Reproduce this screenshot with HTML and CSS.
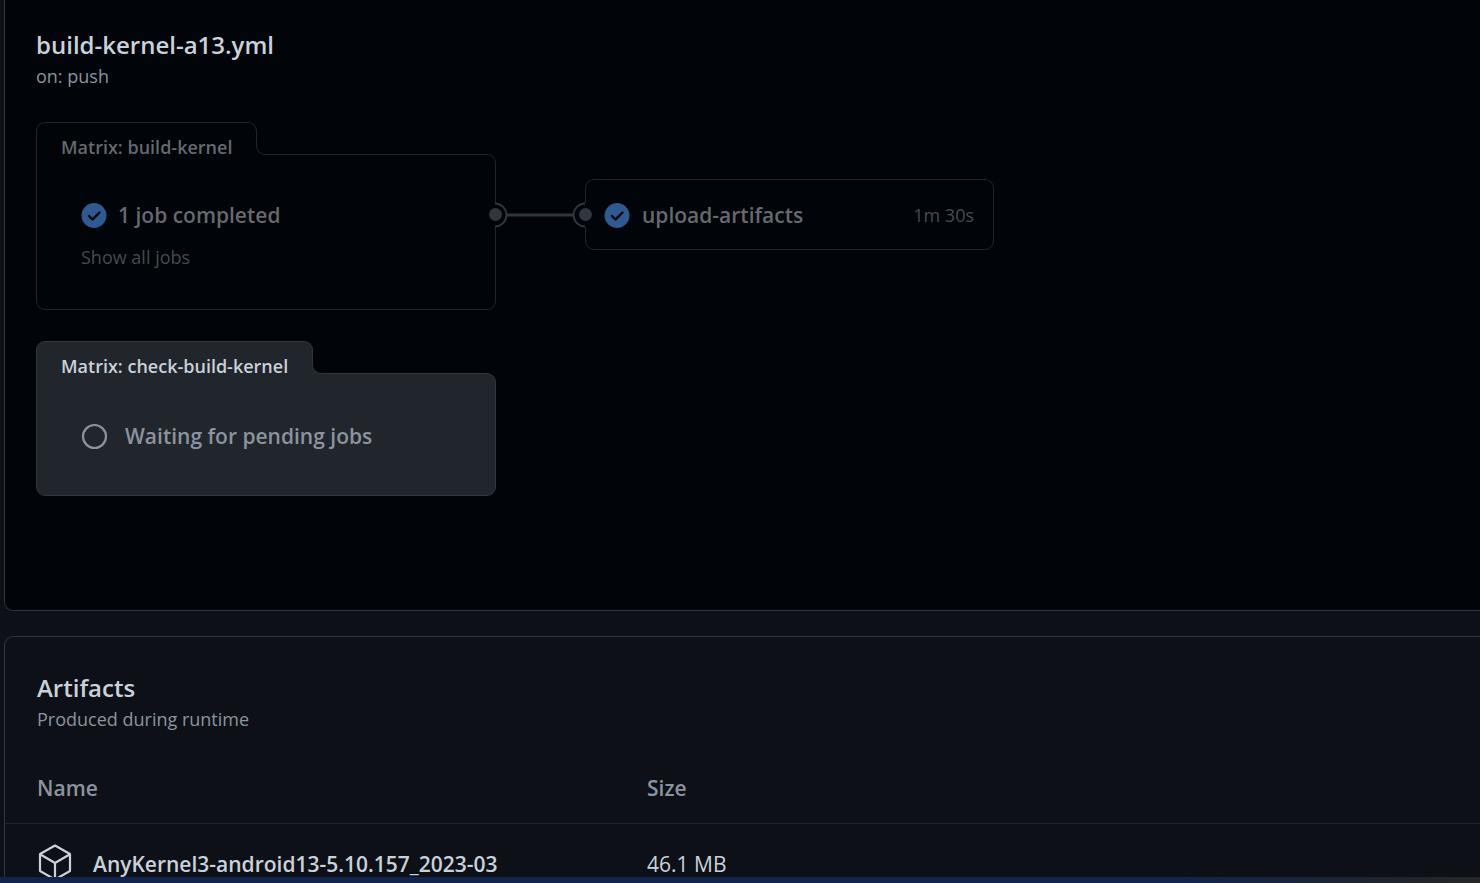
FILE: index.html
```
<!DOCTYPE html>
<html lang="en">
<head>
    <meta charset="UTF-8">
    <meta name="viewport" content="width=device-width, initial-scale=1.0">
    <title>build-kernel-a13.yml</title>
    <link rel="stylesheet" href="styles.css">
</head>
<body>
    <main class="page">
        <section class="panel workflow">
            <h2 class="title">build-kernel-a13.yml</h2>
            <p class="subtitle">on: push</p>

            <div class="graph-row dimmed">
                <div class="matrix">
                    <h3 class="matrix-tab">Matrix: build-kernel</h3>
                    <div class="matrix-box">
                        <div class="job">
                            <svg class="icon" viewBox="0 0 26 26" aria-hidden="true">
                                <circle class="check-disc" cx="13" cy="13.5" r="12.5"/>
                                <path class="check-mark" d="M8 14l3.5 3.5 7-7"/>
                            </svg>
                            <span class="job-name">1 job completed</span>
                        </div>
                        <button class="show-all" type="button">Show all jobs</button>
                    </div>
                </div>

                <svg class="connector" viewBox="0 0 90 26" aria-hidden="true">
                    <path class="port-gap" d="M0 1v24M90 1v24"/>
                    <path class="port-ring" d="M0 1.5a11.5 11.5 0 0 1 0 23M90 1.5a11.5 11.5 0 0 0 0 23"/>
                    <path class="wire" d="M12 13h66"/>
                    <circle class="port-dot" cx="0.5" cy="12.5" r="6.5"/>
                    <circle class="port-dot" cx="90.5" cy="12.5" r="6.5"/>
                </svg>

                <a class="job-card" href="#upload-artifacts">
                    <svg class="icon" viewBox="0 0 26 26" aria-hidden="true">
                        <circle class="check-disc" cx="13" cy="13.5" r="12.5"/>
                        <path class="check-mark" d="M8 14l3.5 3.5 7-7"/>
                    </svg>
                    <span class="job-name">upload-artifacts</span>
                    <span class="job-time">1m 30s</span>
                </a>
            </div>

            <div class="graph-row">
                <div class="matrix pending">
                    <h3 class="matrix-tab">Matrix: check-build-kernel</h3>
                    <div class="matrix-box">
                        <div class="job">
                            <svg class="icon" viewBox="0 0 26 26" aria-hidden="true">
                                <circle class="wait-ring" cx="13.5" cy="13.5" r="11.5"/>
                            </svg>
                            <span class="job-name">Waiting for pending jobs</span>
                        </div>
                    </div>
                </div>
            </div>
        </section>

        <section class="panel artifacts">
            <h2 class="title">Artifacts</h2>
            <p class="subtitle">Produced during runtime</p>
            <table>
                <thead>
                    <tr>
                        <th class="name-col">Name</th>
                        <th>Size</th>
                    </tr>
                </thead>
                <tbody>
                    <tr>
                        <td>
                            <a class="artifact" href="#artifact">
                                <svg class="package" viewBox="0 0 36 38" aria-hidden="true">
                                    <path d="M18 0.500L33 9v17L18 34.500 3 26V9zM3.500 9.500L18 18l14.500-8.500M18 18v16"/>
                                </svg>
                                AnyKernel3-android13-5.10.157_2023-03
                            </a>
                        </td>
                        <td>46.1 MB</td>
                    </tr>
                </tbody>
            </table>
        </section>
    </main>
    <div class="taskbar"></div>
</body>
</html>
```

FILE: styles.css
```
* {
    box-sizing: border-box;
}
body {
    margin: 0;
    height: 100vh;
    display: flex;
    flex-direction: column;
    background-color: #0d1117;
    color: #c9d1d9;
    font-family: "Segoe UI", "Open Sans", sans-serif;
    font-size: 21px;
    line-height: 32px;
}
h2, h3, p {
    margin: 0;
}
a {
    color: inherit;
    text-decoration: none;
}
.page {
    flex: 1;
    min-height: 0;
    overflow: hidden;
    padding-left: 4px;
}
.taskbar {
    height: 6px;
    background: linear-gradient(to right, #10244c 80%, #1c2430 92%, #262626);
}

/* Panels run off the right side of the window */
.panel {
    border: 1px solid #30363d;
    border-right: none;
}
.workflow {
    padding: 29px 31px 114px;
    border-top: none;
    border-radius: 0 0 0 9px;
    background-color: #010409;
}
.artifacts {
    margin-top: 25px;
    padding-top: 35px;
    border-radius: 9px 0 0 0;
}
.title {
    font-size: 24px;
    font-weight: 600;
}
.subtitle {
    color: #8b949e;
    font-size: 18px;
    line-height: 30px;
}

/* Job graph */
.graph-row {
    display: flex;
    align-items: flex-start;
    margin-top: 31px;
}
.matrix {
    width: 460px;
    --fill: #010409;
    --line: #21262d;
}
.matrix-tab {
    position: relative;
    z-index: 1;
    width: max-content;
    height: 33px;
    margin-bottom: -1px;
    padding: 8px 24px 0;
    border: 1px solid var(--line);
    border-bottom: none;
    border-radius: 9px 9px 0 0;
    background-color: var(--fill);
    font-size: 18px;
    font-weight: 600;
    line-height: 32px;
}
/* Curve that joins the tab to the box */
.matrix-tab::before {
    content: "";
    position: absolute;
    left: 100%;
    bottom: 0;
    width: 12px;
    height: 22px;
    background-color: var(--fill);
}
.matrix-tab::after {
    content: "";
    position: absolute;
    left: 100%;
    bottom: 0;
    width: 30px;
    height: 24px;
    border-left: 1px solid var(--line);
    border-bottom: 1px solid var(--line);
    border-bottom-left-radius: 9px;
    background-color: #010409;
}
.matrix-box {
    padding: 44px 44px 36px;
    border: 1px solid var(--line);
    border-radius: 0 9px 9px 9px;
    background-color: var(--fill);
}
.job {
    display: flex;
    align-items: center;
    gap: 11px;
}
.job-name {
    font-weight: 600;
}
.icon {
    flex: none;
    width: 26px;
    height: 26px;
    overflow: visible;
}
.check-disc {
    fill: #2d5a90;
}
.check-mark {
    fill: none;
    stroke: #010409;
    stroke-width: 2.4;
    stroke-linecap: round;
    stroke-linejoin: round;
}
.wait-ring {
    fill: none;
    stroke: #8b949e;
    stroke-width: 2.2;
}
.show-all {
    display: block;
    margin-top: 10px;
    padding: 0;
    border: none;
    background: none;
    color: #464b51;
    font: inherit;
    font-size: 18px;
    cursor: pointer;
}
.connector {
    position: relative;
    width: 90px;
    height: 26px;
    margin: 80px 0 0 -1px;
    overflow: visible;
    fill: none;
    stroke: #30363d;
}
.port-gap {
    stroke: #010409;
    stroke-width: 3;
}
.port-ring {
    stroke-width: 2;
}
.wire {
    stroke-width: 3;
}
.port-dot {
    fill: #30363d;
    stroke: none;
}
.job-card {
    display: flex;
    align-items: center;
    gap: 12px;
    width: 409px;
    height: 71px;
    margin-top: 57px;
    padding: 0 19px 0 18px;
    border: 1px solid #21262d;
    border-radius: 9px;
}
.job-time {
    margin-left: auto;
    color: #464b51;
    font-size: 18px;
}
.dimmed {
    color: #65696e;
}
.pending {
    --fill: #21252c;
    --line: #30363d;
}
.pending .matrix-box {
    padding-top: 46px;
    padding-bottom: 43px;
}
.pending .job {
    gap: 18px;
    color: #8b949e;
}

/* Artifact list */
table {
    width: 100%;
    margin-top: 38px;
    border-collapse: collapse;
    table-layout: fixed;
}
th, td {
    padding: 0;
    text-align: left;
}
th {
    padding-bottom: 19px;
    border-bottom: 1px solid #21262d;
    color: #8b949e;
    font-weight: 600;
}
th:first-child, td:first-child, .artifacts .title, .artifacts .subtitle {
    padding-left: 32px;
}
.name-col {
    width: 642px;
}
td {
    padding-top: 21px;
}
.artifact {
    display: flex;
    align-items: center;
    gap: 20px;
    font-weight: 600;
}
.package {
    flex: none;
    width: 36px;
    height: 38px;
    overflow: visible;
    fill: none;
    stroke: #c9d1d9;
    stroke-width: 2.2;
    stroke-linejoin: round;
}
```
